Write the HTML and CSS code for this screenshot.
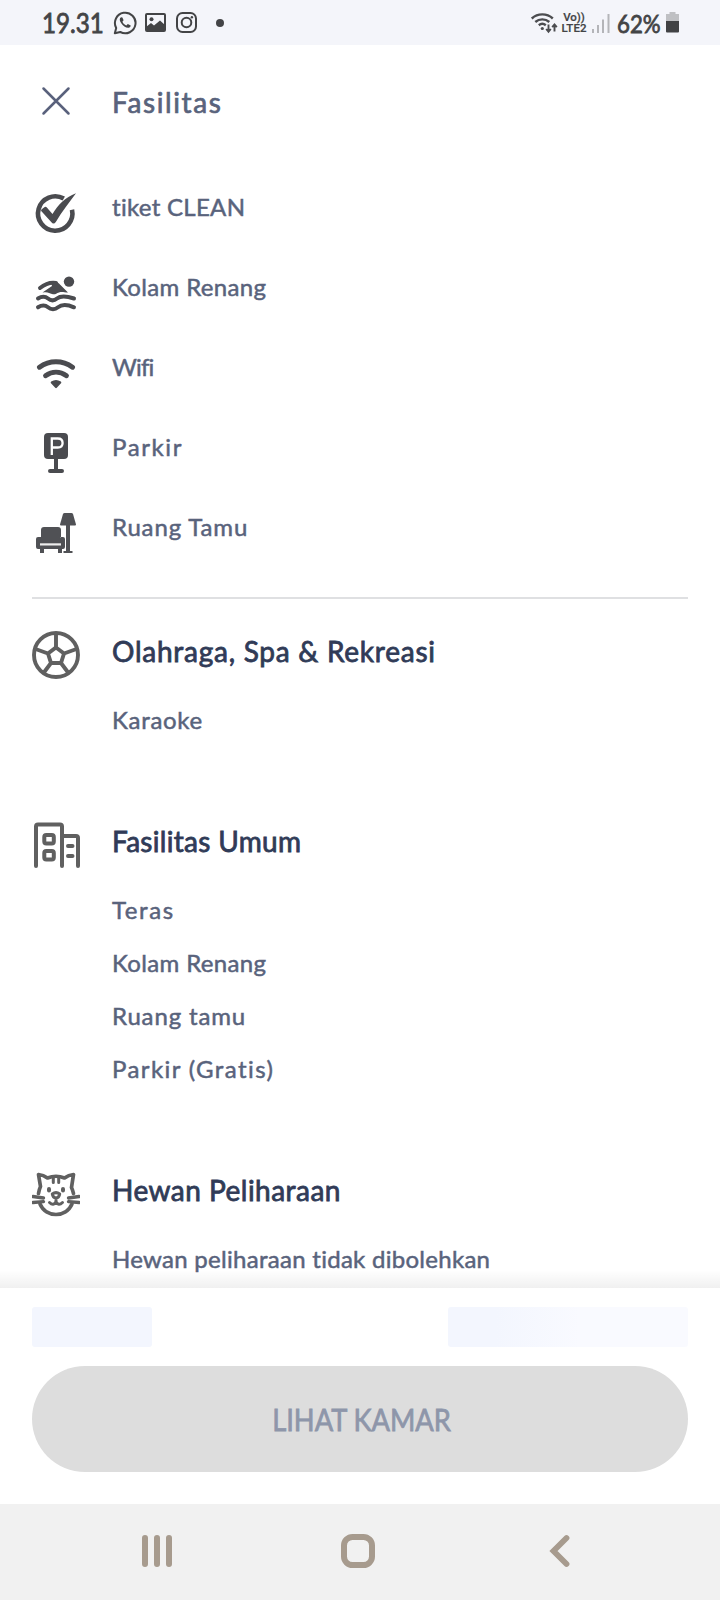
FILE: index.html
```html
<!DOCTYPE html>
<html lang="id">
<head>
<meta charset="utf-8">
<title>Fasilitas</title>
<link rel="stylesheet" href="styles.css">
</head>
<body>
<div class="status">
  <span class="clock">19.31</span>
  <svg class="s-wa" width="24" height="24" viewBox="0 0 24 24" fill="none" stroke="#434446" stroke-width="2"><path d="M1.8 22.3l1.4-5.4A10.3 10.3 0 1 1 7.300 21z" stroke-linejoin="round"/><path d="M8 6.200c-1.800 1.200-1.600 3.300.1 5.700 2.100 3.100 5.400 5.500 7.900 4.800 1.200-.4 1.700-1.200 1.700-2.200l-2.900-1.600-1.500 1.500c-1.800-.7-3.100-2-3.900-3.700l1.200-1.400-1.200-2.900z" fill="#434446" stroke="none"/></svg>
  <svg class="s-img" width="21" height="19" viewBox="0 0 21 19"><rect x="1" y="1" width="19" height="17" rx="1" fill="none" stroke="#434446" stroke-width="2"/><circle cx="6.500" cy="6.200" r="2" fill="#434446"/><path d="M1 14l5-4 3 2.500 6-5 5 4.500v6H1z" fill="#434446"/></svg>
  <svg class="s-ig" width="21" height="21" viewBox="0 0 21 21" fill="none" stroke="#434446" stroke-width="2"><rect x="1" y="1" width="19" height="19" rx="5.500"/><circle cx="10.500" cy="10.500" r="4.800"/><circle cx="15.900" cy="5.200" r="1.200" fill="#434446" stroke="none"/></svg>
  <span class="s-dot"></span>
  <span class="s-space"></span>
  <svg class="s-wifi" width="27" height="22" viewBox="0 0 27 22" fill="none" stroke="#4c4d50" stroke-width="2.400"><path d="M.8 6.500a15.500 15.500 0 0 1 21 0M4.300 10a10.500 10.500 0 0 1 14 0M7.800 13.300a5.500 5.500 0 0 1 7 0"/><circle cx="11.300" cy="16.500" r="1.600" fill="#4c4d50" stroke="none"/><path d="M17.500 12.500v7M15.200 17l2.300 2.700 2.300-2.700M23.500 19.500v-7M21.200 15.200l2.300-2.700 2.300 2.700" stroke-width="1.900"/></svg>
  <span class="lte"><span>Vo))</span><span>LTE2</span></span>
  <svg class="s-sig" width="18" height="20" viewBox="0 0 18 20" stroke="#b4b5b9" stroke-width="2"><path d="M1 16v4" /><path d="M6 12v8"/><path d="M11 6.500V20"/><path d="M16.500 1v19"/></svg>
  <span class="pct">62%</span>
  <svg class="s-bat" width="13" height="21" viewBox="0 0 13 21"><path d="M3.500 0h6v2H13v8H0V2h3.500z" fill="#bfc0c3"/><path d="M0 9h13v10.500q0 1-1 1H1q-1 0-1-1z" fill="#414244"/></svg>
</div>

<header class="bar">
  <svg width="48" height="48" viewBox="0 0 48 48" fill="none" stroke="#59617c" stroke-width="2.500" stroke-linecap="round"><path d="M11.500 11.500l25 25M36.500 11.500l-25 25"/></svg>
  <h1>Fasilitas</h1>
</header>

<main>
  <ul class="main-list">
    <li>
      <svg width="48" height="48" viewBox="0 0 48 48"><path d="M31.800 8.600A17.200 17.200 0 1 0 40 19.800" fill="none" stroke="#4a4b4f" stroke-width="4.600"/><path d="M9.200 21q-.5-1 .5-1.700l3-2.300q1-.7 1.900.3l5.900 6.700C26 15 33 7.500 44 3.300 37.500 12 30 21.500 23.800 32q-2.200 3-4.600 0z" fill="#4a4b4f"/></svg>
      <span class="t-clean">tiket CLEAN</span>
    </li>
    <li>
      <svg width="48" height="48" viewBox="0 0 48 48" fill="none" stroke="#4a4b4f" stroke-width="4" stroke-linecap="round"><circle cx="37" cy="11.600" r="5.200" fill="#4a4b4f" stroke="none"/><path d="M8 18c5-4 10-6 16-5"/><path d="M10.500 22.500L20 16l-1-4.500c3-.5 6 0 8 2l9 9c-4 0-6-1-9 0s-4 2.500-7 1.500-4-2.500-9.500-1.500z" fill="#4a4b4f" stroke="none"/><path d="M6 28.500c4-2.500 7-2.500 10 0s6 2.500 9 0 8-3 17 0"/><path d="M6 37.300c4-2.500 7-2.500 10 0s7 2.500 10 0 9-3 16 0"/></svg>
      <span class="t-kolam">Kolam Renang</span>
    </li>
    <li>
      <svg width="48" height="48" viewBox="0 0 48 48" fill="none" stroke="#4a4b4f" stroke-width="5" stroke-linecap="round"><path d="M7.500 17.200c10-7.300 23-7.300 33 0"/><path d="M13.500 25.800c6.500-4.800 14.500-4.800 21 0" stroke-width="4.800"/><path d="M19.800 32.500q4.200-3 8.400 0L24 37z" fill="#4a4b4f" stroke-width="2.200" stroke-linejoin="round"/></svg>
      <span class="t-wifi">Wifi</span>
    </li>
    <li>
      <svg width="48" height="48" viewBox="0 0 48 48"><rect x="12" y="3" width="24" height="26" rx="4" fill="#4a4b4f"/><path d="M24 28v13M18 41h12" fill="none" stroke="#4a4b4f" stroke-width="4" stroke-linecap="round"/><path d="M19.800 25V8.500h6q4.800 0 4.800 4.500t-4.800 4.500h-6" fill="none" stroke="#fff" stroke-width="2.300"/></svg>
      <span class="t-parkir">Parkir</span>
    </li>
    <li>
      <svg width="48" height="48" viewBox="0 0 48 48" fill="#505155"><path d="M12 17q-3 0-3 3v7h20v-7q0-3-3-3z"/><path d="M4 29q0-2 2-2h3q1 0 1 1v2h18v-2q0-1 1-1h2q2 0 2 2v8q0 2-2 2h-1v4h-4v-4H12v4H8v-4H6q-2 0-2-2zM9 25h19v7H9z"/><path d="M8 33.300h21v2.200H8z" fill="#eee"/><path d="M32.500 3h7q1 0 1.500 1l3 10.500q0 1-1 1H29q-1 0-1-1L31 4q.5-1 1.500-1z"/><path d="M34 14h4v27h2.500v2h-9v-2H34z"/></svg>
      <span class="t-ruang">Ruang Tamu</span>
    </li>
  </ul>

  <section>
    <svg width="48" height="48" viewBox="0 0 48 48" fill="none" stroke="#606060" stroke-width="3.900"><circle cx="24" cy="24" r="22"/><path d="M24 16.500l8 6-3 9.500H19l-3-9.500zM24 3v13.500M32 22.500L44.500 18M29 32l7.500 10M19 32l-7.500 10M16 22.500L3.500 18"/></svg>
    <div>
      <h2 class="h-olah">Olahraga, Spa &amp; Rekreasi</h2>
      <ul><li class="t-karaoke">Karaoke</li></ul>
    </div>
  </section>
  <section>
    <svg width="48" height="48" viewBox="0 0 48 48" fill="none" stroke="#606060" stroke-width="4" stroke-linecap="round" stroke-linejoin="round"><path d="M4 45V5.500q0-2 2-2h22q2 0 2 2V45M30 15h14q2 0 2 2v28M36 25h4.500M36 35h4.500"/><rect x="12.300" y="14" width="9.500" height="8.500" rx="2"/><rect x="12.300" y="30" width="9.500" height="8.500" rx="2"/></svg>
    <div>
      <h2 class="h-umum">Fasilitas Umum</h2>
      <ul>
        <li class="t-teras">Teras</li>
        <li class="t-kolam">Kolam Renang</li>
        <li class="t-ruang">Ruang tamu</li>
        <li class="t-gratis">Parkir (Gratis)</li>
      </ul>
    </div>
  </section>
  <section>
    <svg width="48" height="48" viewBox="0 0 48 48" fill="none" stroke="#606060" stroke-width="3.700" stroke-linecap="round" stroke-linejoin="round"><path d="M6.500 23.500q1-5 2-7L6.500 4.500q5 .5 9 3.500 8.500-3.500 17 0 4-3 9-3.500L39.500 17.500q1 2 2 6M8 34c6 14 26 14 32 0"/><path d="M21.300 7.500v5M26.700 7.500v5" stroke-width="3"/><path d="M17 19v1.500M31 19v1.500" stroke-width="4"/><path d="M20.300 24q3.700-2.800 7.400 0-.5 3.500-3.700 4.200-3.200-.7-3.700-4.200zM24 29v3M17.500 32.500q4 4 6.500-.7 2.500 4.700 6.500.7" stroke-width="3"/><path d="M1 26.500l10.500 1.500M1 32.500l10.500-.8M47 26.500l-10.500 1.500M47 32.500l-10.500-.8" stroke-width="3.300"/></svg>
    <div>
      <h2 class="h-hewan">Hewan Peliharaan</h2>
      <ul><li class="t-hewan">Hewan peliharaan tidak dibolehkan</li></ul>
    </div>
  </section>
</main>

<footer>
  <div class="skeletons"><span class="sk-a"></span><span class="sk-b"></span></div>
  <button class="cta" disabled><span>LIHAT KAMAR</span></button>
</footer>
<nav>
  <svg width="34" height="36" viewBox="0 0 34 36" stroke="#a79b8e" stroke-width="6" stroke-linecap="round"><path d="M5 5v26M17 5v26M29 5v26"/></svg>
  <svg class="home" width="36" height="36" viewBox="0 0 36 36" fill="none" stroke="#a79b8e" stroke-width="6"><rect x="4" y="4" width="28" height="28" rx="8.500"/></svg>
  <svg width="26" height="36" viewBox="0 0 26 36" fill="none" stroke="#a79b8e" stroke-width="5.800" stroke-linecap="round"><path d="M20.500 5L7.500 18l13 13"/></svg>
</nav>
</body>
</html>
```
FILE: styles.css
```css
* { box-sizing: border-box; }
body {
  margin: 0;
  width: 720px;
  height: 1600px;
  display: flex;
  flex-direction: column;
  overflow: hidden;
  background: #fff;
  color: #59637c;
  font-family: Lato, "Open Sans", sans-serif;
  font-size: 24px;
  line-height: 32px;
  -webkit-text-stroke: 0.5px currentColor;
  white-space: nowrap;
}
ul { list-style: none; margin: 0; padding: 0; }
svg { flex: none; display: block; }

.status {
  height: 45px;
  flex: none;
  display: flex;
  align-items: center;
  padding: 0 41px 0 42px;
  background: #f4f5fa;
  color: #434446;
}
.clock {
  width: 61px;
  font-size: 26px;
  -webkit-text-stroke-width: 0.8px;
  transform: scaleX(0.93);
  transform-origin: left;
}
.s-wa { margin-left: 10px; }
.s-img { margin-left: 8px; }
.s-ig { margin-left: 10px; }
.s-dot { width: 8px; height: 8px; margin-left: 19px; border-radius: 50%; background: #434446; }
.s-space { flex: 1; }
.lte {
  display: flex;
  flex-direction: column;
  align-items: center;
  width: 26px;
  margin: 0 5px 0 3px;
  font: 500 11.500px/11px Roboto, sans-serif;
  -webkit-text-stroke-width: 0.2px;
}
.pct {
  width: 45px;
  margin: 0 4px 0 7px;
  font-size: 25px;
  -webkit-text-stroke-width: 0.8px;
  transform: scaleX(0.89);
  transform-origin: left;
}

.bar {
  height: 129px;
  flex: none;
  display: flex;
  align-items: flex-start;
  gap: 32px;
  padding: 32px;
}
h1 {
  margin: 7px 0 0;
  font-size: 28px;
  line-height: 36px;
  font-weight: 400;
  letter-spacing: 1.6px;
  -webkit-text-stroke-width: 0.7px;
}

main { flex: 1; min-height: 0; overflow: hidden; padding: 0 32px; }
.main-list { height: 423px; }
.main-list li { display: flex; gap: 32px; height: 80px; padding-top: 16px; }
.main-list span { padding-top: 1px; }

section { display: flex; gap: 32px; margin-bottom: 64px; }
.main-list + section { border-top: 2px solid #dfe0e2; padding-top: 32px; }
h2 {
  margin: 2px 0 35px;
  font-size: 28px;
  line-height: 36px;
  font-weight: 400;
  color: #303b57;
  -webkit-text-stroke-width: 0.8px;
}
section li { height: 53px; }

/* per-label tracking */
.t-clean { letter-spacing: 0.3px; }
.t-kolam { letter-spacing: 0.35px; }
.t-wifi { letter-spacing: -0.8px; }
.t-parkir { letter-spacing: 1.6px; }
.t-ruang { letter-spacing: 0.85px; }
.t-karaoke { letter-spacing: 0.7px; }
.t-teras { letter-spacing: 1.6px; }
.t-gratis { letter-spacing: 1.4px; }
.t-hewan { letter-spacing: 0.28px; }
.h-olah { letter-spacing: 0.75px; }
.h-umum { letter-spacing: 0.3px; }
.h-hewan { letter-spacing: 0.48px; }

footer {
  position: relative;
  flex: none;
  height: 216px;
  padding: 19px 32px 0;
  background: #fff;
}
footer::before {
  content: "";
  position: absolute;
  left: 0;
  right: 0;
  bottom: 100%;
  height: 18px;
  background: linear-gradient(rgba(0, 0, 0, 0), rgba(0, 0, 0, 0.06));
}
.skeletons { display: flex; justify-content: space-between; height: 40px; margin-bottom: 19px; }
.sk-a { width: 120px; border-radius: 3px; background: #f3f6fe; }
.sk-b { width: 240px; border-radius: 3px; background: linear-gradient(90deg, #f3f6fe 20%, #f9faff 55%); }
.cta {
  display: block;
  width: 100%;
  height: 106px;
  padding: 0;
  border: 0;
  border-radius: 53px;
  background: #ddd;
  color: #8e96aa;
  font: 400 31px/40px Lato, sans-serif;
  -webkit-text-stroke: 0.8px currentColor;
}
.cta span { display: inline-block; transform: scaleX(0.88); margin-left: 3px; }
nav {
  flex: none;
  height: 96px;
  display: flex;
  justify-content: space-between;
  align-items: center;
  padding: 0 148px 2px 140px;
  background: #f1f1f1;
}
.home { margin-right: 5px; }
```
